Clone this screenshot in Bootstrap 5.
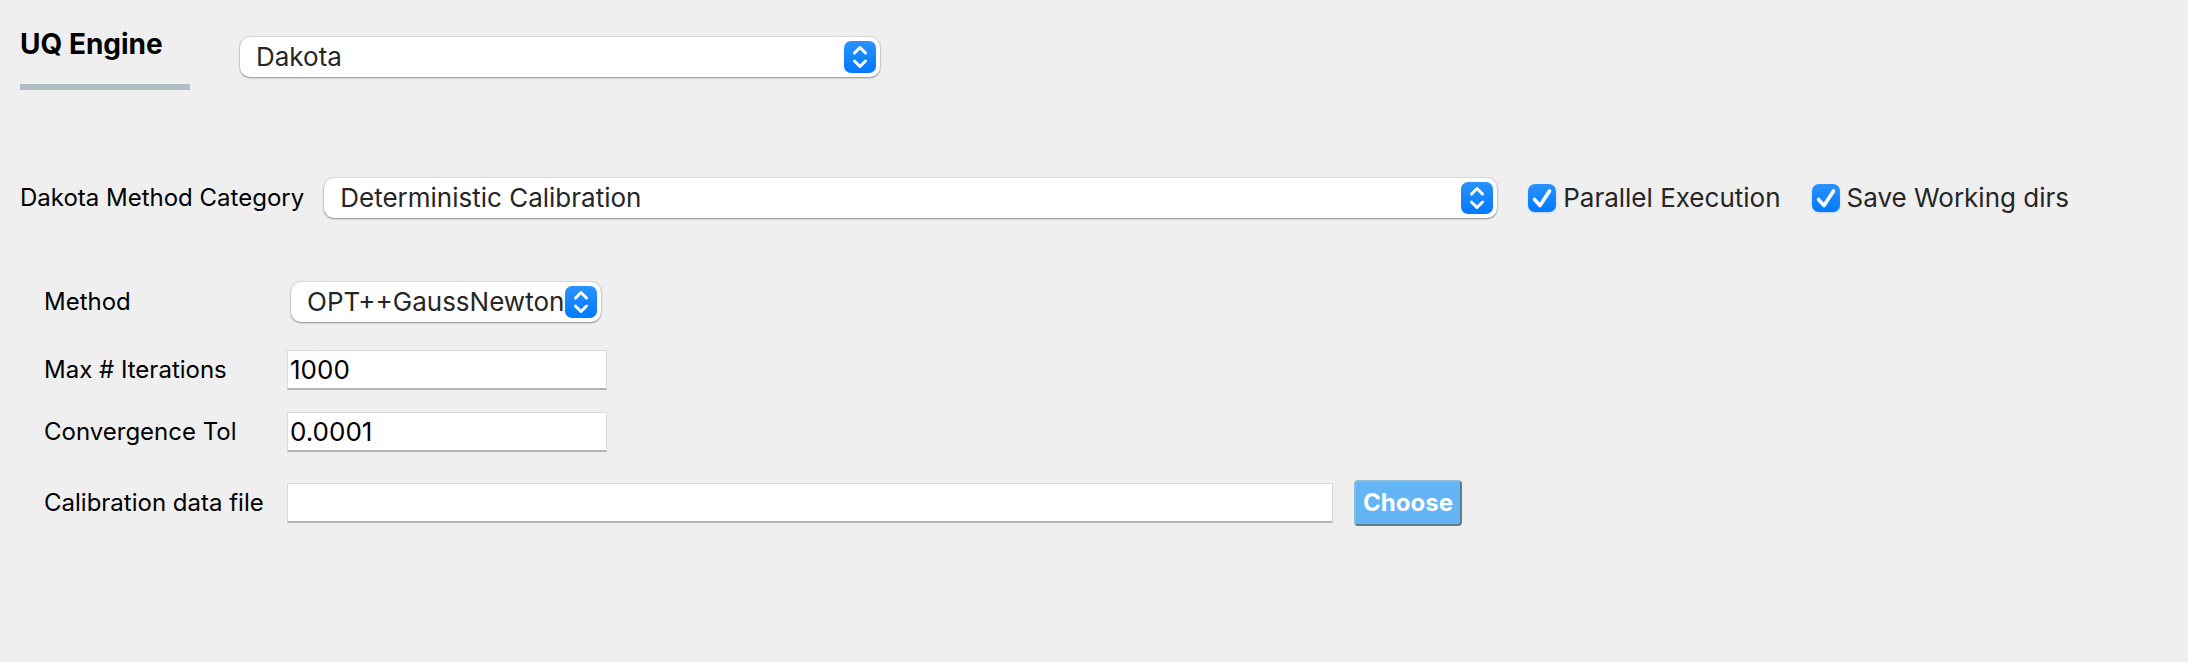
<!DOCTYPE html>
<html lang="en">
<head>
<meta charset="utf-8">
<meta name="viewport" content="width=device-width, initial-scale=1">
<title>UQ Engine</title>
<link href="https://cdn.jsdelivr.net/npm/bootstrap@5.3.0/dist/css/bootstrap.min.css" rel="stylesheet">
<style>
  body { background: #efefef; color: #000; font-family: Inter, "Liberation Sans", sans-serif; font-size: 24px; line-height: 32px; }
  .engine-title { width: 170px; height: 66px; padding-top: 4px; font-size: 28px; line-height: 32px; border-bottom: 6px solid #b0bec5; }
  .combo {
    height: 40px; padding: 0 34px 0 16px; border: 0; border-radius: 10px; color: #262626;
    font-size: 26px; line-height: 40px; background-color: #fff; background-size: 32px 32px; background-position: right 4px center;
    box-shadow: 0 0 1px 1px rgba(0,0,0,.08), 0 1px 2px rgba(0,0,0,.35);
    background-image: url("data:image/svg+xml,%3Csvg xmlns='http://www.w3.org/2000/svg' viewBox='0 0 32 32'%3E%3Cdefs%3E%3ClinearGradient id='g' x2='0' y2='1'%3E%3Cstop stop-color='%232b91ff'/%3E%3Cstop offset='1' stop-color='%23007aff'/%3E%3C/linearGradient%3E%3C/defs%3E%3Crect width='32' height='32' rx='7' fill='url(%23g)'/%3E%3Cpath d='M10.5 12L16 6.5l5.5 5.5M10.5 20L16 25.5l5.5-5.5' fill='none' stroke='%23fff' stroke-width='3' stroke-linecap='round' stroke-linejoin='round'/%3E%3C/svg%3E");
  }
  .combo-engine { max-width: 640px; margin: 13px 0 0 50px; }
  .category-row { max-width: 2069px; margin-top: 88px; }
  .combo-category { margin-left: 20px; }
  .tick { gap: 7px; margin-left: 31px; color: #262626; font-size: 26px; }
  .tick .form-check-input { width: 28px; height: 28px; margin: 0; border: 0; border-radius: 7px; box-shadow: 0 1px 2px rgba(0,122,255,.25); }
  .tick .form-check-input:checked {
    background-color: #007aff; background-size: 28px 28px;
    background-image: url("data:image/svg+xml,%3Csvg xmlns='http://www.w3.org/2000/svg' viewBox='0 0 28 28'%3E%3Cpath d='M6.5 15.5L12 21.5L21.5 7' fill='none' stroke='%23fff' stroke-width='3.6' stroke-linecap='round' stroke-linejoin='round'/%3E%3C/svg%3E"), linear-gradient(#2b91ff, #007aff);
  }
  .settings { display: grid; grid-template-columns: 243px minmax(0, 1fr); max-width: 1462px; padding-left: 44px; margin-top: 64px; align-items: center; }
  .combo-method { width: 310px; margin-left: 4px; }
  .line-field { height: 40px; padding: 0 2px; border: 1px solid #dadada; border-bottom: 2px solid #b4b4b4; border-radius: 0; color: #000; font-size: 26px; line-height: 36px; }
  .line-short { width: 320px; }
  .gap-l { margin-top: 28px; }
  .gap-m { margin-top: 22px; }
  .choose { width: 108px; height: 46px; margin-left: 21px; padding: 0; flex: none; background: #64b5f6; color: #fff; font-size: 24px; font-weight: 700; line-height: 40px; border: 2px solid; border-color: #8bbcd3 #607d8b #607d8b #8bbcd3; border-radius: 4px; }
  .choose:hover, .choose:active { background: #42a5f5 !important; color: #fff !important; }
</style>
</head>
<body>
<main class="py-4">
  <div class="d-flex align-items-start px-3 ms-1">
    <label for="engine" class="engine-title fw-bold text-nowrap flex-shrink-0">UQ Engine</label>
    <select id="engine" class="form-select combo combo-engine"><option>Dakota</option></select>
  </div>
  <div class="category-row d-flex align-items-center ps-3">
    <label for="category" class="text-nowrap ms-1">Dakota Method Category</label>
    <select id="category" class="form-select combo combo-category flex-fill w-auto"><option>Deterministic Calibration</option></select>
    <div class="tick d-flex align-items-center text-nowrap">
      <input class="form-check-input" type="checkbox" id="parallel" checked>
      <label for="parallel">Parallel Execution</label>
    </div>
    <div class="tick d-flex align-items-center text-nowrap">
      <input class="form-check-input" type="checkbox" id="save" checked>
      <label for="save">Save Working dirs</label>
    </div>
  </div>
  <div class="settings">
    <label for="method">Method</label>
    <select id="method" class="form-select combo combo-method"><option>OPT++GaussNewton</option></select>
    <label for="iterations" class="gap-l">Max # Iterations</label>
    <input id="iterations" type="text" class="form-control line-field line-short gap-l" value="1000">
    <label for="tolerance" class="gap-m">Convergence Tol</label>
    <input id="tolerance" type="text" class="form-control line-field line-short gap-m" value="0.0001">
    <label for="datafile" class="gap-l text-nowrap">Calibration data file</label>
    <div class="d-flex align-items-center gap-l">
      <input id="datafile" type="text" class="form-control line-field">
      <button type="button" class="btn choose">Choose</button>
    </div>
  </div>
</main>
<script src="https://cdn.jsdelivr.net/npm/bootstrap@5.3.0/dist/js/bootstrap.bundle.min.js"></script>
</body>
</html>
